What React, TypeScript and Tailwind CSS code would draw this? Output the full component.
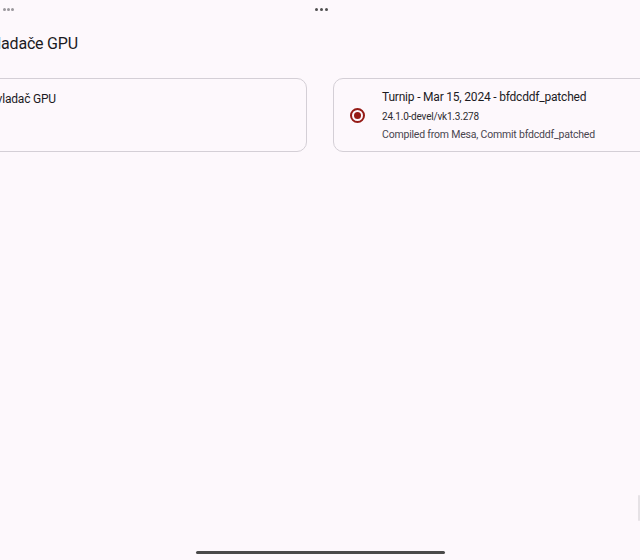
import React from "react";

const font = { fontFamily: "Roboto, 'Noto Sans', sans-serif" };

const Dots = ({ className }: { className: string }) => (
  <div className={`flex items-center ${className}`}>
    <span className="w-[3px] h-[3px] rounded-full bg-current" />
    <span className="w-[3px] h-[3px] rounded-full bg-current" />
    <span className="w-[3px] h-[3px] rounded-full bg-current" />
  </div>
);

const Radio = () => (
  <span className="flex items-center justify-center w-[15px] h-[15px] rounded-full border-2 border-[#951b16]">
    <span className="w-[7px] h-[7px] rounded-full bg-[#951b16]" />
  </span>
);

export default function App() {
  return (
    <div
      className="relative w-[640px] h-[560px] overflow-hidden bg-[#fdf8fc] text-[#1c1b1f]"
      style={font}
    >
      <div className="flex justify-between items-center h-[18px] pl-[3px]">
        <Dots className="gap-[1px] text-[#9a979c]" />
        <Dots className="gap-[2px] text-[#505050] mr-[312px]" />
      </div>

      <div className="ml-[-21px] mt-[16px] text-[16px] leading-[20px] tracking-[-0.2px]">
        Ovladače GPU
      </div>

      <div className="flex gap-[26px] mt-[24px] ml-[-86px]">
        <div className="w-[393px] h-[74px] shrink-0 rounded-[10px] border border-[#d4cfd6] pl-[16px] pt-[12px]">
          <div className="text-[12px] leading-[17px] tracking-[-0.2px]">
            Systémový ovladač GPU
          </div>
        </div>
        <div className="w-[340px] h-[74px] shrink-0 rounded-[10px] border border-[#d4cfd6] flex items-center">
          <div className="w-[48px] flex justify-center pr-[1px]">
            <Radio />
          </div>
          <div className="flex flex-col pt-[1px]">
            <div className="text-[12px] leading-[17px] tracking-[-0.2px]">
              Turnip - Mar 15, 2024 - bfdcddf_patched
            </div>
            <div className="text-[10px] leading-[14px] mt-[4px] tracking-[-0.2px] text-[#2d2b30]">
              24.1.0-devel/vk1.3.278
            </div>
            <div className="text-[10.5px] leading-[14px] mt-[4px] tracking-[-0.2px] text-[#49454f]">
              Compiled from Mesa, Commit bfdcddf_patched
            </div>
          </div>
        </div>
      </div>

      <div className="absolute left-[196px] top-[551px] w-[249px] h-[3px] rounded-full bg-[#4a4a4a]" />
      <div className="absolute left-[638px] top-[495px] w-[2px] h-[26px] rounded-full bg-[#e6e2e6]" />
    </div>
  );
}
